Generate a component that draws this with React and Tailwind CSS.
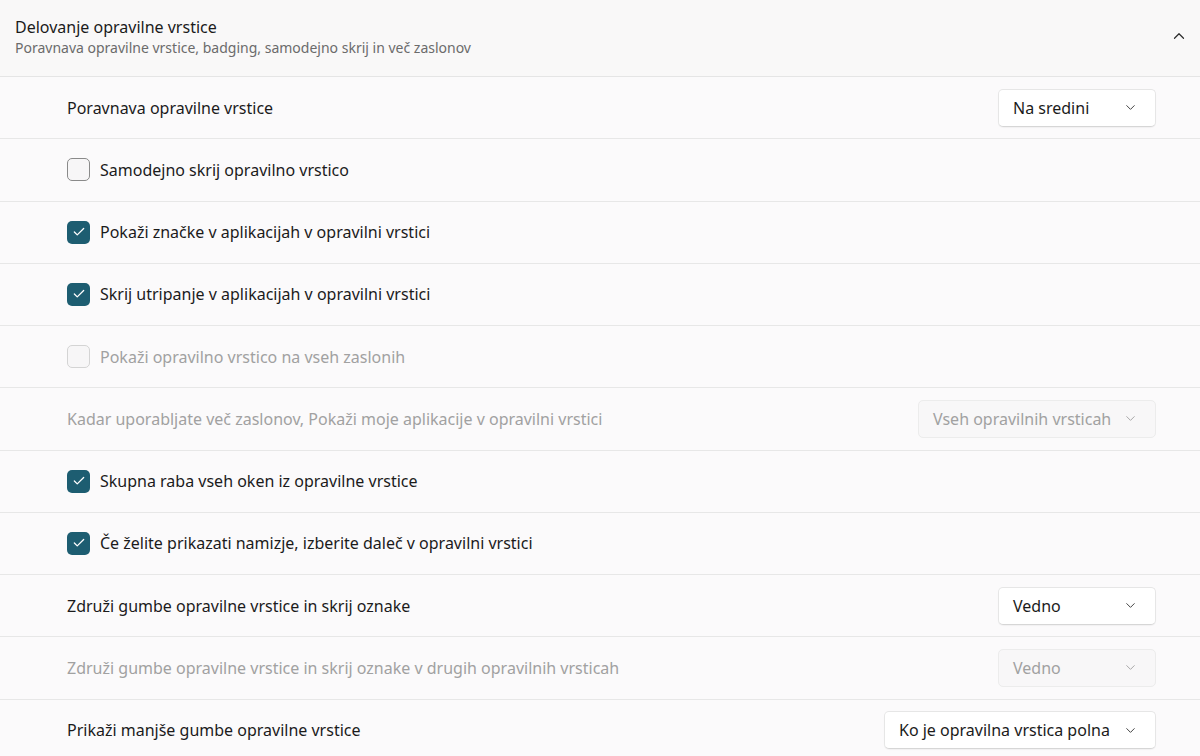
import { ChevronDown, ChevronUp, Check } from 'lucide-react';

const rows = [
  { type: 'select', label: 'Poravnava opravilne vrstice', value: 'Na sredini', width: 'w-[158px]' },
  { type: 'check', label: 'Samodejno skrij opravilno vrstico', checked: false },
  { type: 'check', label: 'Pokaži značke v aplikacijah v opravilni vrstici', checked: true },
  { type: 'check', label: 'Skrij utripanje v aplikacijah v opravilni vrstici', checked: true },
  { type: 'check', label: 'Pokaži opravilno vrstico na vseh zaslonih', checked: false, disabled: true },
  { type: 'select', label: 'Kadar uporabljate več zaslonov, Pokaži moje aplikacije v opravilni vrstici', value: 'Vseh opravilnih vrsticah', width: 'w-[238px]', disabled: true },
  { type: 'check', label: 'Skupna raba vseh oken iz opravilne vrstice', checked: true },
  { type: 'check', label: 'Če želite prikazati namizje, izberite daleč v opravilni vrstici', checked: true },
  { type: 'select', label: 'Združi gumbe opravilne vrstice in skrij oznake', value: 'Vedno', width: 'w-[158px]' },
  { type: 'select', label: 'Združi gumbe opravilne vrstice in skrij oznake v drugih opravilnih vrsticah', value: 'Vedno', width: 'w-[158px]', disabled: true },
  { type: 'select', label: 'Prikaži manjše gumbe opravilne vrstice', value: 'Ko je opravilna vrstica polna', width: 'w-[272px]' },
];

function Checkbox({ checked, disabled }) {
  if (checked) {
    return (
      <span className="flex h-[23px] w-[23px] items-center justify-center rounded-[5px] bg-[#1d5d71]">
        <Check size={14} strokeWidth={2.2} className="text-white" />
      </span>
    );
  }
  return (
    <span
      className={
        'h-[23px] w-[23px] rounded-[5px] border bg-[#f7f6f7] ' +
        (disabled ? 'border-[#d4d4d4]' : 'border-[#8a8a8a]')
      }
    />
  );
}

function Select({ value, width, disabled }) {
  return (
    <div
      className={
        'flex h-[38px] items-center justify-between rounded-[5px] border pl-[14px] pr-[17px] text-[16px] ' +
        width +
        (disabled
          ? ' border-[#ececec] bg-[#f8f7f8] text-[#a1a1a1]'
          : ' border-[#e6e6e6] border-b-[#d6d6d6] bg-white text-[#1b1b1b] shadow-[0_1px_1px_rgba(0,0,0,0.04)]')
      }
    >
      <span>{value}</span>
      <ChevronDown size={15} strokeWidth={1.6} className={disabled ? 'text-[#a8a8a8]' : 'text-[#444]'} />
    </div>
  );
}

export default function App() {
  return (
    <div className="h-[756px] w-[1200px] overflow-hidden bg-[#fbfafb] font-['Noto_Sans',sans-serif]">
      <div className="flex h-[77px] items-center justify-between border-b border-[#e5e5e5] bg-[#f9f8f8] pl-[15px] pr-[12px]">
        <div className="-mt-[2px]">
          <div className="text-[16px] leading-[22px] text-[#1b1b1b]">Delovanje opravilne vrstice</div>
          <div className="text-[14px] leading-[20px] text-[#6b6b6b]">
            Poravnava opravilne vrstice, badging, samodejno skrij in več zaslonov
          </div>
        </div>
        <ChevronUp size={18} strokeWidth={1.6} className="-mt-[4px] text-[#2b2b2b]" />
      </div>
      {rows.map((row, i) => (
        <div
          key={i}
          className="flex h-[62.25px] items-center justify-between border-b border-[#e7e7e7] pl-[67px] pr-[44px]"
        >
          {row.type === 'check' ? (
            <div className="flex items-center gap-[10px]">
              <Checkbox checked={row.checked} disabled={row.disabled} />
              <span className={'text-[16px] ' + (row.disabled ? 'text-[#a1a1a1]' : 'text-[#1b1b1b]')}>
                {row.label}
              </span>
            </div>
          ) : (
            <>
              <span className={'text-[16px] ' + (row.disabled ? 'text-[#a1a1a1]' : 'text-[#1b1b1b]')}>
                {row.label}
              </span>
              <Select value={row.value} width={row.width} disabled={row.disabled} />
            </>
          )}
        </div>
      ))}
    </div>
  );
}
